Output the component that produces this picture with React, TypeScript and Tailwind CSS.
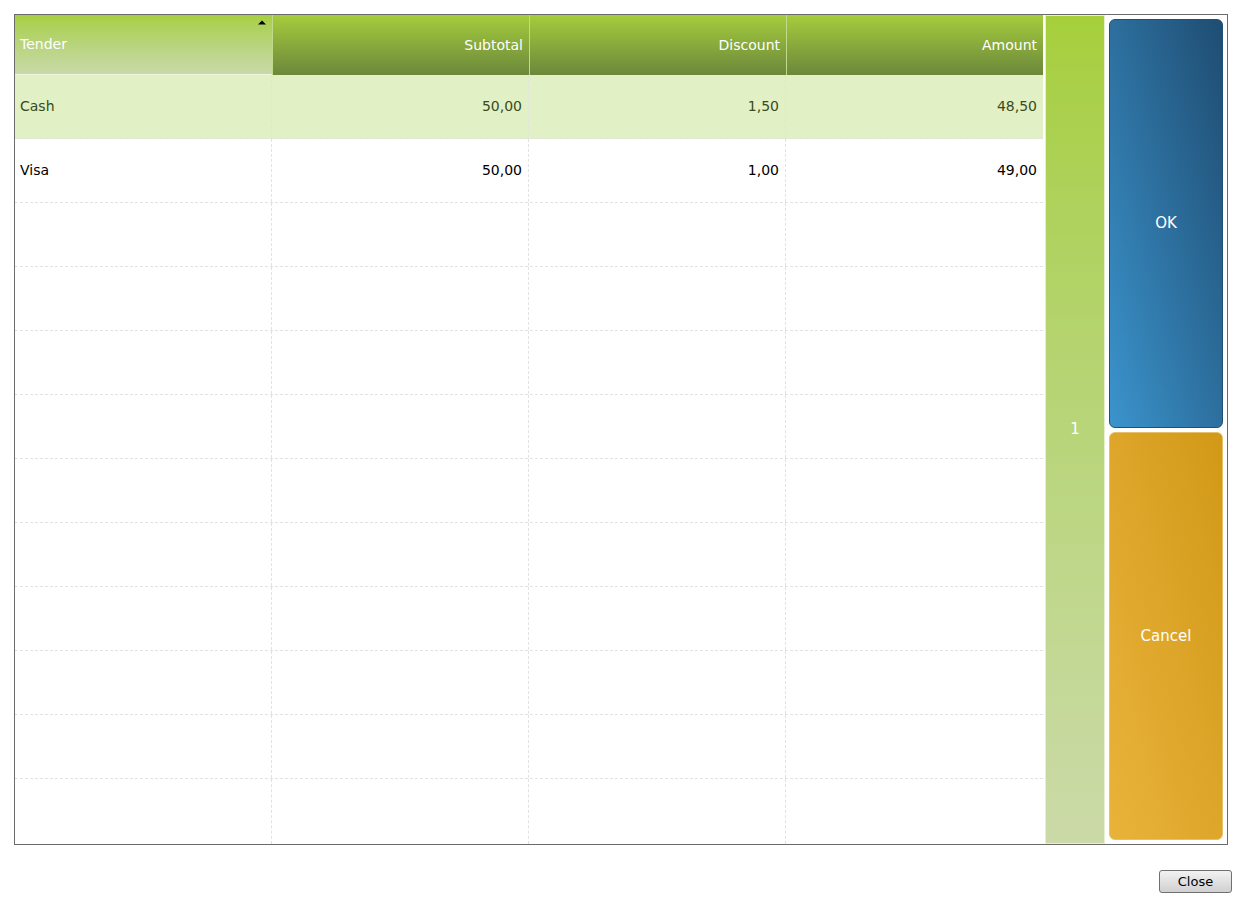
const rows = [
  { tender: "Cash", subtotal: "50,00", discount: "1,50", amount: "48,50", selected: true },
  { tender: "Visa", subtotal: "50,00", discount: "1,00", amount: "49,00", selected: false },
];

const emptyRows = Array.from({ length: 10 });

function Cell({ children, right, last }: { children?: React.ReactNode; right?: boolean; last?: boolean }) {
  return (
    <div
      className={`flex items-center ${right ? "justify-end pr-[6px]" : "justify-start pl-[5px]"} ${
        last ? "" : "border-r border-dashed border-[#e2e2e2]"
      }`}
    >
      {children}
    </div>
  );
}

export default function App() {
  return (
    <div className="w-[1242px] h-[903px] bg-white font-['DejaVu_Sans',sans-serif] text-[14px] relative">
      <div className="pt-[14px] px-[14px]">
        <div className="h-[831px] border border-[#6b6b6b] flex">
          {/* grid */}
          <div className="w-[1028px] flex flex-col">
            <div className="h-[60px] grid grid-cols-4 text-white">
              <div className="relative flex items-center px-[5px] bg-gradient-to-b from-[#a7cf3f] to-[#c9d9a9] border-b border-[#eef5dc]">
                Tender
                <svg className="absolute right-[5px] top-[4px]" width="10" height="6" viewBox="0 0 10 6">
                  <path d="M1 5.5 L5 1.5 L9 5.5 Z" fill="#000" />
                </svg>
              </div>
              <div className="flex items-center justify-end px-[6px] bg-gradient-to-b from-[#a5cd3b] to-[#6c883b] border-l border-[#c1d98a]">
                Subtotal
              </div>
              <div className="flex items-center justify-end px-[6px] bg-gradient-to-b from-[#a5cd3b] to-[#6c883b] border-l border-[#c1d98a]">
                Discount
              </div>
              <div className="flex items-center justify-end px-[6px] bg-gradient-to-b from-[#a5cd3b] to-[#6c883b] border-l border-[#c1d98a]">
                Amount
              </div>
            </div>
            {rows.map((r) => (
              <div
                key={r.tender}
                className={`h-[64px] grid grid-cols-4 border-b border-dashed border-[#e2e2e2] ${
                  r.selected ? "bg-[#e2f0c5] text-[#3a4a1a]" : "bg-white text-black"
                }`}
              >
                <Cell>{r.tender}</Cell>
                <Cell right>{r.subtotal}</Cell>
                <Cell right>{r.discount}</Cell>
                <Cell right last>{r.amount}</Cell>
              </div>
            ))}
            {emptyRows.map((_, i) => (
              <div
                key={i}
                className={`grid grid-cols-4 ${i === 9 ? "flex-1" : "h-[64px] border-b border-dashed border-[#e2e2e2]"}`}
              >
                <Cell />
                <Cell />
                <Cell />
                <Cell last />
              </div>
            ))}
          </div>

          {/* pager strip */}
          <div className="ml-[2px] w-[60px] border border-[#e6f0cf] bg-gradient-to-b from-[#a6cf3b] to-[#cbdaa8] flex items-center justify-center text-white text-[15px]">
            1
          </div>

          {/* buttons */}
          <div className="flex-1 flex flex-col gap-[4px] p-[4px] text-white text-[15px]">
            <div className="flex-1 rounded-[6px] border border-[#1f5177] bg-gradient-to-tr from-[#3b94cd] to-[#1f4d72] flex items-center justify-center">
              OK
            </div>
            <div className="flex-1 rounded-[6px] border border-[#e6c06a] bg-gradient-to-tr from-[#e9b33a] to-[#d29915] flex items-center justify-center">
              Cancel
            </div>
          </div>
        </div>
      </div>

      <div className="absolute left-[1159px] top-[870px] w-[73px] h-[23px] rounded-[3px] border border-[#707070] bg-gradient-to-b from-[#f2f2f2] to-[#d0d0d0] flex items-center justify-center text-[13px] text-black">
        Close
      </div>
    </div>
  );
}
